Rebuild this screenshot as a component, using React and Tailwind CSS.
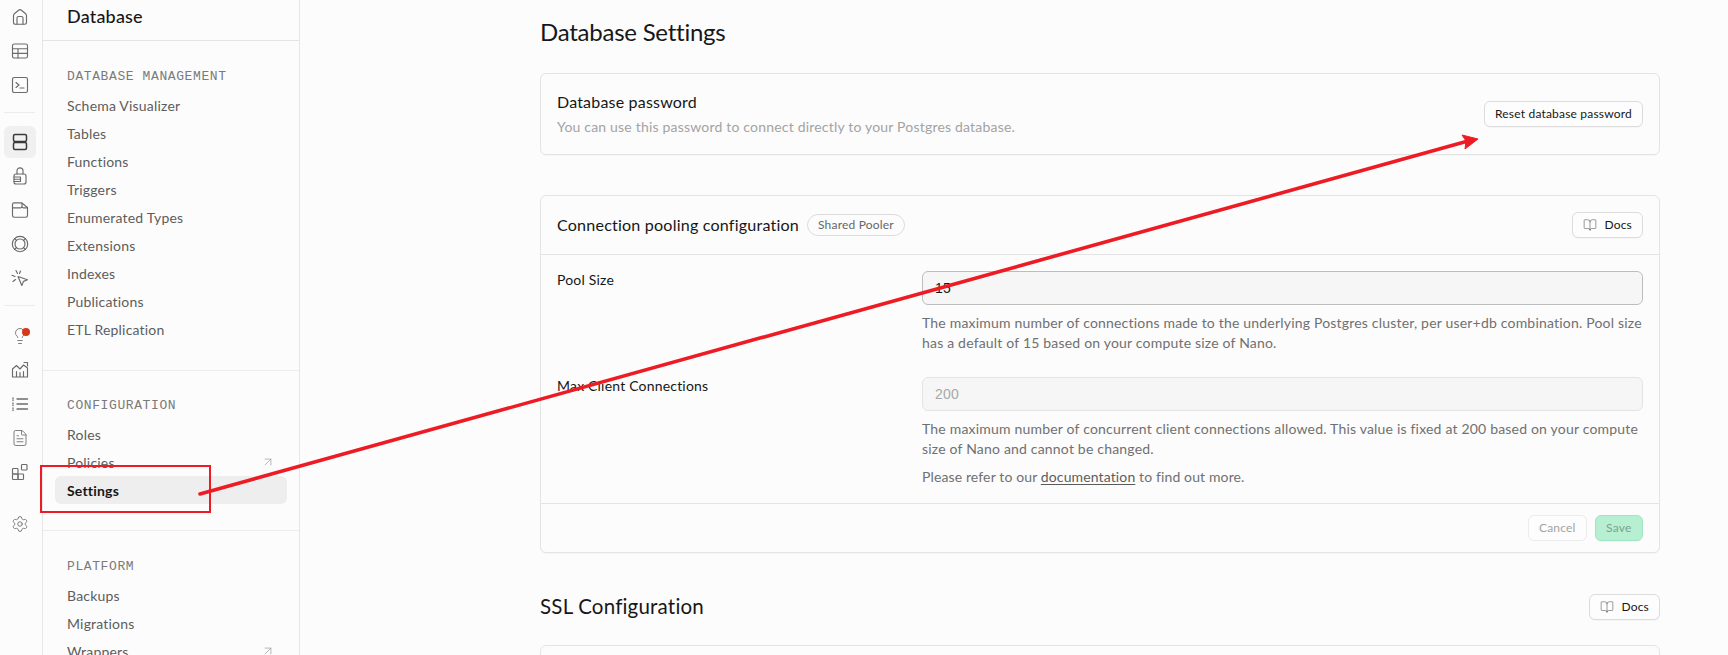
import React from "react";
import { BookOpen, ArrowUpRight, Settings, FileText, Lightbulb } from "lucide-react";

const Ico = ({ children, active }) => (
  <div className={`flex items-center justify-center w-8 h-8 rounded-md ${active ? "bg-[#f0f0f0] text-[#3a3a3a]" : "text-[#6b6b6b]"}`}>
    {children}
  </div>
);
const S = ({ children, size = 18, sw = 1.15 }) => (
  <svg width={size} height={size} viewBox="0 0 18 18" fill="none" stroke="currentColor" strokeWidth={sw} strokeLinecap="round" strokeLinejoin="round">{children}</svg>
);

const rail = [
  [<S key="h"><path d="M2.500 14.500V7.600c0-.7.3-1.300.8-1.800l4.300-3.600c.8-.7 2-.7 2.800 0l4.300 3.600c.5.5.8 1.100.8 1.800v6.900c0 1-.8 1.700-1.700 1.700H4.200c-.9 0-1.700-.7-1.700-1.700Z" /><path d="M6 16V10c0-.8.7-1.500 1.500-1.500h3c.8 0 1.500.7 1.500 1.500v6" /></S>],
  [<S key="t"><rect x="1.500" y="2" width="15" height="14" rx="1.800" /><path d="M1.500 6.700h15M1.500 11.300h15M7 6.700V16" /></S>],
  [<S key="c"><rect x="1.500" y="1.500" width="15" height="15" rx="1.800" /><path d="m5 6.500 3 2.500-3 2.500M9 12h4" /></S>],
];
const rail2 = [
  [<S key="d" sw={1.5}><rect x="2.500" y="1.500" width="13" height="7" rx="1.500" /><rect x="2.500" y="9.500" width="13" height="7" rx="1.500" /></S>, true],
  [<S key="a"><path d="M6 7V3.800a3 3 0 0 1 6 0V7" /><rect x="3" y="7" width="12" height="10" rx="2" /><path d="M3 10h6.500M3 12.200h6.500M3 14.500h6.500M9.500 10v4.500" /></S>],
  [<S key="f"><path d="M1.500 7V3.500c0-.9.800-1.700 1.700-1.700h7.300l6 4.700v8c0 1-.8 1.700-1.700 1.700H3.200c-.9 0-1.700-.7-1.700-1.700Z" /><path d="M1.500 6.800h8.300c.7 0 1.200-.5 1.200-1.200V2.200M11 5.600c0 .7.600 1.200 1.300 1.200h4.200" /></S>],
  [<S key="r"><circle cx="9" cy="9" r="7.700" /><circle cx="9" cy="9" r="5" /><path d="M3.600 3.500 5.500 5.400M12.500 12.600l1.900 1.900M14.400 3.600 12.500 5.500M5.500 12.500l-1.900 1.900" /></S>],
  [<S key="e"><path d="m7 7.500 9.500 3.300-4 1.600-1.700 4.100Z" /><path d="M6.500 4.500 5 1.500M4 7.500 1 6.300M4.500 10.500 2 12.500M8.500 4.500l1-2.500" /></S>],
];
const rail3 = [
  [<div key="l" className="relative flex"><Lightbulb size={18} strokeWidth={1.15} /><span className="absolute right-[-1px] top-[1px] w-2 h-2 rounded-full bg-[#d4391b]" /></div>],
  [<S key="g"><path d="M1.500 16V8l4-3.500L9 8l3.500-4 4 3v9ZM1.500 16h15M5.500 16v-5.500M9 16v-4.500M12.500 16V10.500" /><path d="M13 1.500h3.500V5" /></S>],
  [<S key="i" sw={1.3}><path d="M6 4h10.500M6 9h10.500M6 14h10.500" /><path d="M2 3v.5M2 5v.5M2 8v.5M2 10v.5M2 13v.5M2 15v.5" /></S>],
  [<FileText key="x" size={18} strokeWidth={1.15} />],
  [<S key="b"><rect x="1.500" y="5.500" width="5.500" height="5.500" rx=".8" /><rect x="1.500" y="11" width="5.500" height="5.500" rx=".8" /><rect x="7" y="11" width="5.500" height="5.500" rx=".8" /><rect x="10.500" y="1.500" width="5.500" height="5.500" rx=".8" /></S>],
];

const Label = ({ children }) => (
  <div className="font-['Liberation_Mono',monospace] text-[13px] tracking-[0.6px] text-[#7a7a7a] leading-5 mb-[4px] uppercase">{children}</div>
);
const Item = ({ children, ext, active }) => (
  <div className={`flex items-center justify-between h-7 -mx-3 px-3 rounded-md text-[14px] ${active ? "bg-[#eeeeee] text-[#171717] font-bold" : "text-[#5c5c5c]"}`}>
    <span>{children}</span>
    {ext && <ArrowUpRight size={14} strokeWidth={1} className="text-[#8a8a8a]" />}
  </div>
);
const Btn = ({ children, className = "" }) => (
  <button className={`h-[26px] flex items-center gap-[7px] px-2.5 rounded-md border border-[#dcdcdc] bg-[#fdfdfd] text-xs text-[#171717] shadow-[0_1px_1px_rgba(0,0,0,0.03)] ${className}`}>{children}</button>
);
const Docs = () => (
  <Btn><BookOpen size={14} strokeWidth={1} className="text-[#555]" /><span>Docs</span></Btn>
);

export default function App() {
  return (
    <div className="relative flex h-[655px] w-full overflow-hidden bg-[#fcfcfc] font-['Lato',sans-serif] tracking-[0.012em]">
      <aside className="w-[43px] shrink-0 border-r border-[#e6e6e6] flex flex-col items-center pr-[3px]">
        <div className="flex flex-col gap-[2px] pt-px">
          {rail.map((r, i) => <Ico key={i}>{r[0]}</Ico>)}
        </div>
        <div className="w-[31px] h-px bg-[#ececec] mt-[11px] mb-[13px]" />
        <div className="flex flex-col gap-[2px]">
          {rail2.map((r, i) => <Ico key={i} active={r[1]}>{r[0]}</Ico>)}
        </div>
        <div className="w-[31px] h-px bg-[#ececec] mt-[11px] mb-[14px]" />
        <div className="flex flex-col gap-[2px]">
          {rail3.map((r, i) => <Ico key={i}>{r[0]}</Ico>)}
        </div>
        <div className="mt-[20px]"><Ico><Settings size={18} strokeWidth={1.15} /></Ico></div>
      </aside>

      <nav className="w-[257px] shrink-0 border-r border-[#e6e6e6]">
        <div className="h-[41px] border-b border-[#e4e4e4] pl-6 pb-2 flex items-center text-[18px] text-[#171717] font-medium">Database</div>
        <div className="pl-6 pr-6 pt-[26px] pb-[27px] border-b border-[#ececec]">
          <Label>Database Management</Label>
          {["Schema Visualizer", "Tables", "Functions", "Triggers", "Enumerated Types", "Extensions", "Indexes", "Publications", "ETL Replication"].map(t => <Item key={t}>{t}</Item>)}
        </div>
        <div className="pl-6 pr-6 pt-[25px] pb-[26px] border-b border-[#ececec]">
          <Label>Configuration</Label>
          <Item>Roles</Item>
          <Item ext>Policies</Item>
          <Item active>Settings</Item>
        </div>
        <div className="pl-6 pr-6 pt-[26px]">
          <Label>Platform</Label>
          <Item>Backups</Item>
          <Item>Migrations</Item>
          <Item ext>Wrappers</Item>
        </div>
      </nav>

      <main className="flex-1 min-w-0 pl-[240px] pr-[68px] text-[14px]">
        <h1 className="text-2xl leading-8 tracking-[-0.01em] text-[#171717] pt-4 mb-[25px]">Database Settings</h1>

        <section className="h-[82px] rounded-md border border-[#e4e4e4] shadow-[0_1px_1px_rgba(0,0,0,0.03)] flex items-center justify-between px-4 mb-[40px]">
          <div>
            <div className="text-[16px] text-[#171717] leading-[26px] -mt-px">Database password</div>
            <div className="text-[#a3a3a3] leading-[24px]">You can use this password to connect directly to your Postgres database.</div>
          </div>
          <Btn>Reset database password</Btn>
        </section>

        <section className="rounded-md border border-[#e4e4e4] shadow-[0_1px_1px_rgba(0,0,0,0.03)] mb-[41px]">
          <header className="h-[59px] border-b border-[#e4e4e4] flex items-center justify-between px-4">
            <div className="flex items-center gap-2">
              <span className="text-[16.1px] text-[#171717]">Connection pooling configuration</span>
              <span className="h-[22px] flex items-center px-2.5 rounded-full border border-[#dcdcdc] text-xs text-[#666]">Shared Pooler</span>
            </div>
            <Docs />
          </header>
          <div className="px-4 pt-4 pb-[16px]">
            <div className="grid grid-cols-[365px_1fr] mb-[25px]">
              <div className="text-[#171717] leading-5 -mt-px">Pool Size</div>
              <div>
                <div className="h-[34px] rounded-md border border-[#bdbdbd] bg-[#f6f6f6] px-3 flex items-center text-[#171717] font-['Liberation_Sans',sans-serif]">15</div>
                <p className="mt-[8px] text-[#707070] leading-[20px]">The maximum number of connections made to the underlying Postgres cluster, per user+db combination. Pool size has a default of 15 based on your compute size of Nano.</p>
              </div>
            </div>
            <div className="grid grid-cols-[365px_1fr] -mt-px">
              <div className="text-[#171717] leading-5 -mt-px">Max Client Connections</div>
              <div>
                <div className="h-[34px] rounded-md border border-[#e4e4e4] bg-[#f6f6f6] px-3 flex items-center text-[#a8a8a8] font-['Liberation_Sans',sans-serif]">200</div>
                <p className="mt-[8px] text-[#707070] leading-[20px]">The maximum number of concurrent client connections allowed. This value is fixed at 200 based on your compute size of Nano and cannot be changed.</p>
                <p className="mt-2 text-[#707070] leading-[20px] tracking-[0.009em]">Please refer to our <span className="underline underline-offset-2 text-[#5c5c5c]">documentation</span> to find out more.</p>
              </div>
            </div>
          </div>
          <footer className="h-[49px] border-t border-[#e4e4e4] flex items-center justify-end gap-2 px-4">
            <Btn className="!border-[#ececec] !text-[#a3a3a3] !shadow-none">Cancel</Btn>
            <Btn className="!border-[#9ee6c2] !bg-[#b7efd2] !text-[#7f9f8f] !px-[10.5px]">Save</Btn>
          </footer>
        </section>

        <div className="flex items-center justify-between h-[26px] mb-[25px]">
          <h2 className="text-[20.5px] text-[#171717] -mt-0.5">SSL Configuration</h2>
          <Docs />
        </div>
        <section className="h-[60px] rounded-md border border-[#e4e4e4]" />
      </main>

      <div className="absolute left-[40px] top-[465px] w-[171px] h-[48px] border-2 border-[#ed1c24] pointer-events-none" />
      <svg className="absolute inset-0 pointer-events-none" width="1728" height="655" fill="none">
        <path d="M200 494 1468 141" stroke="#ed1c24" strokeWidth="3.6" strokeLinecap="round" />
        <path d="M1478 139 1462 135 1466 141 1465 149Z" fill="#ed1c24" stroke="#ed1c24" strokeWidth="1" strokeLinejoin="round" />
      </svg>
    </div>
  );
}
